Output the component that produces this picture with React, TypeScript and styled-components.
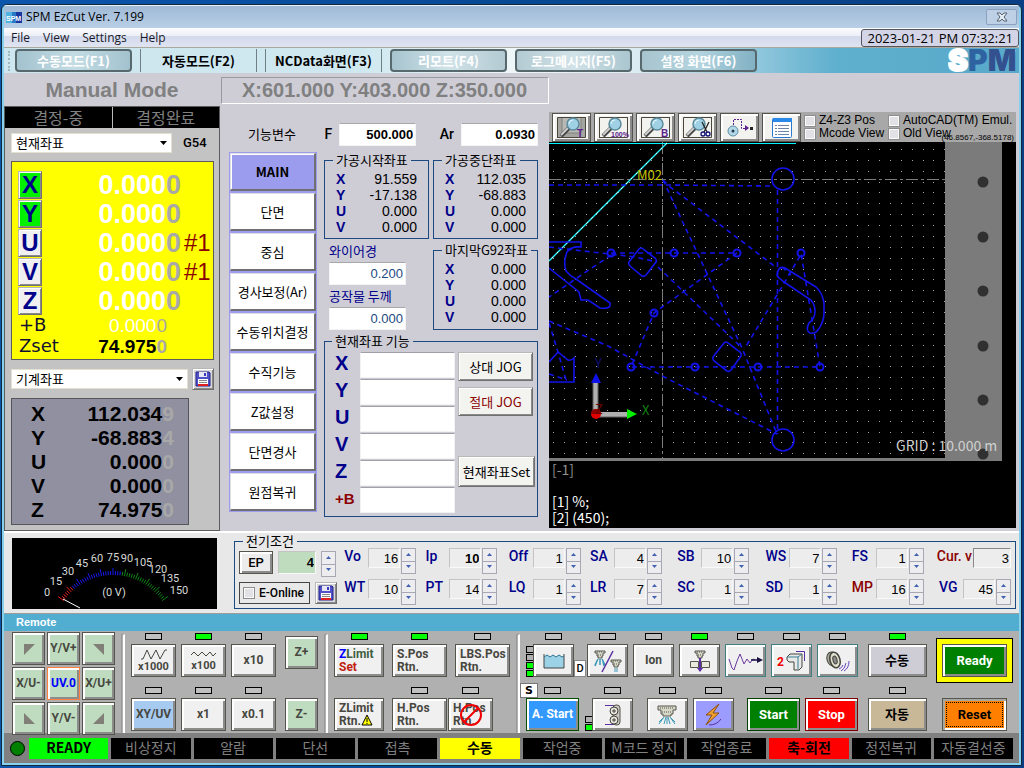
import React from 'react';
import styled, { createGlobalStyle, css } from 'styled-components';

const GlobalStyle = createGlobalStyle`
  * { box-sizing: border-box; }
  body {
    margin: 0;
    background: #0a4fa5;
    color: #000;
    font-family: "Liberation Sans", "Noto Sans CJK KR", sans-serif;
    font-size: 13px;
  }
  button, input, select { font-family: inherit; margin: 0; }
  button { padding: 0; cursor: pointer; }
  svg { display: block; }
`;

const uiFont = '"Open Sans", "Noto Sans CJK KR", sans-serif';
const koFont = '"Noto Sans CJK KR", "Liberation Sans", sans-serif';
const panelFont = 'Roboto, "Noto Sans CJK KR", sans-serif';
const navy = '#00008b';
const maroon = '#8b0000';

const raised = css`
  border: 1px solid #55554d;
  box-shadow: inset 2px 2px 0 #fff, inset -2px -2px 0 #8c8c8c;
`;
const softRaised = css`
  border: 1px solid #b8b8b8;
  border-right-color: #707070;
  border-bottom-color: #707070;
  box-shadow: inset 1px 1px 0 #fff, inset -1px -1px 0 #8a8a8a;
`;

/* ---------- window frame ---------- */

const Desktop = styled.div`
  min-height: 100vh;
  padding: 4px 2px 2px 1px;
  background: linear-gradient(90deg, #0b55ad, #06468f 60%, #0a3f86);
`;
const Window = styled.div`
  border: 1px solid #14283c;
  border-radius: 6px 6px 0 0;
  padding: 0 2px 2px;
  background: #86d2ee;
  overflow: hidden;
`;
const TitleBar = styled.header`
  display: flex;
  align-items: center;
  gap: 4px;
  height: 23px;
  padding: 0 2px;
  background: linear-gradient(#9fb9d6, #b9cfe7);
  border-top: 1px solid #e8f2fb;
  font: 12px/20px ${uiFont};
`;
const TitleText = styled.h1`
  flex: 1;
  margin: 0;
  font: inherit;
`;
const CloseButton = styled.button`
  display: grid;
  place-items: center;
  width: 31px;
  height: 16px;
  border: 1px solid #8aa2c0;
  border-radius: 2px;
  background: #bdd0e6;
`;
const MenuBar = styled.nav`
  display: flex;
  align-items: center;
  height: 20px;
  padding-left: 7px;
  border-bottom: 1px solid #a8a89c;
  background: linear-gradient(#fdfdff, #eceff8 40%, #d3daec 45%, #e0e4f2);
  font: 12px/18px ${uiFont};
`;
const MenuLink = styled.a`
  margin-right: 13px;
  color: #1a1a2a;
  text-decoration: none;
`;
const Clock = styled.time`
  margin-left: auto;
  padding: 0 5px;
  border: 1px solid #55555f;
  border-radius: 3px;
  background: #d3d5e6;
  font-size: 13px;
  line-height: 16px;
`;
const ModeBar = styled.nav`
  display: flex;
  align-items: center;
  gap: 8px;
  height: 25px;
  padding-left: 4px;
  background: linear-gradient(90deg, #cde6ef, #cfe8f0 35%, #eef6f8 50%, #dcedf2 62%, #5fafce 82%, #58a9ca);
  overflow: hidden;
`;
const Grip = styled.span`
  width: 3px;
  height: 20px;
  margin-right: -4px;
  border-left: 2px dotted #a0b8c0;
`;
const ModeButton = styled.button<{ $plain?: boolean }>`
  flex: none;
  width: 117px;
  height: 23px;
  font: bold 13px/18px ${koFont};
  color: #fff;
  background: linear-gradient(90deg, rgba(110, 150, 165, 0.45), rgba(180, 205, 212, 0.4) 50%, rgba(110, 150, 165, 0.45));
  border: 2px solid #58696e;
  border-radius: 4px;
  white-space: nowrap;
  ${(p) =>
    p.$plain &&
    css`
      color: #000;
      background: none;
      border: 0 solid #6f8086;
      border-width: 0 1px;
      border-radius: 0;
    `}
`;
const LogoSlot = styled.div`
  margin-left: auto;
`;

/* ---------- main area ---------- */

const Main = styled.main`
  display: grid;
  grid-template-columns: 216px 329px minmax(0, 1fr);
  grid-template-rows: 33px auto;
  padding-right: 3px;
  background: #cecdd6;
`;
const ModeHeading = styled.h2`
  margin: 0;
  font-size: 21px;
  line-height: 33px;
  text-align: center;
  color: #808080;
`;
const MachineReadout = styled.output`
  margin: 4px 0 2px 1px;
  padding-left: 20px;
  border: 1px solid #fff;
  border-top-color: #98989e;
  border-left-color: #98989e;
  font-weight: bold;
  font-size: 20px;
  line-height: 25px;
  color: #808080;
  white-space: nowrap;
`;
const LeftPanel = styled.section`
  grid-column: 1;
  border: 1px solid #5c5c5c;
  background: #c3c3c3;
`;
const LampRow = styled.div`
  display: grid;
  grid-template-columns: 1fr 1fr;
  gap: 1px;
  background: #bbb;
`;
const Lamp = styled.div`
  height: 21px;
  background: #000;
  color: #808080;
  font: 16px/20px ${koFont};
  text-align: center;
`;
const LeftBody = styled.div`
  display: flex;
  flex-direction: column;
  gap: 8px;
  padding: 5px 5px 5px 6px;
`;
const SelectRow = styled.div`
  display: flex;
  align-items: center;
  gap: 4px;
`;
const Offset = styled.span`
  flex: none;
  width: 38px;
  font: 500 13px/20px ${panelFont};
  padding-left: 7px;
`;
const SelectWrap = styled.span`
  position: relative;
  flex: 1;
`;
const Select = styled.select`
  display: block;
  width: 100%;
  height: 20px;
  padding: 0 4px;
  border: 1px solid #e4e0d0;
  border-radius: 0;
  background: #fff;
  appearance: none;
  font: 13px/18px ${koFont};
`;
const SelectArrow = styled.svg`
  position: absolute;
  right: 5px;
  top: 8px;
  pointer-events: none;
`;
const IconButton = styled.button`
  display: grid;
  place-items: center;
  flex: none;
  width: 22px;
  height: 22px;
  background: #d8d8d8;
  ${softRaised}
`;
const WorkCoords = styled.div`
  padding: 8px 2px 2px 6px;
  border: 1px solid #5c5c5c;
  background: #ff0;
`;
const WorkRow = styled.div`
  display: grid;
  grid-template-columns: 24px 139px 1fr;
  align-items: center;
  height: 29px;
  color: #fff;
  font-weight: bold;
  font-size: 27px;
  line-height: 28px;
`;
const AxisKey = styled.button<{ $on?: boolean }>`
  height: 28px;
  ${softRaised}
  background: ${(p) => (p.$on ? '#00f000' : '#f0f0f0')};
  color: ${navy};
  font-weight: bold;
  font-size: 24px;
  line-height: 24px;
`;
const Digits = styled.span`
  text-align: right;
`;
const Faint = styled.span`
  color: #a8a8a8;
`;
const AxisNote = styled.span`
  padding-left: 3px;
  font-weight: normal;
  font-size: 24px;
  color: ${maroon};
`;
const SubRow = styled.div<{ $strong?: boolean }>`
  display: grid;
  grid-template-columns: 46px 102px;
  height: 21px;
  padding-left: 1px;
  font-size: 19px;
  line-height: 22px;
  color: ${(p) => (p.$strong ? '#000' : '#fff')};
  font-weight: ${(p) => (p.$strong ? 'bold' : 'normal')};
`;
const SubLabel = styled.span`
  color: #101030;
  font: 18px/20px "DejaVu Sans", sans-serif;
`;
const MachineCoords = styled.div`
  width: 178px;
  padding: 3px 14px 2px 19px;
  border: 1px solid #55555c;
  background: #9090a0;
  font-weight: bold;
  font-size: 21px;
  line-height: 24px;
`;
const MachineRow = styled.div`
  display: flex;
  justify-content: space-between;
`;

/* ---------- function area ---------- */

const FunctionPanel = styled.section`
  padding: 16px 11px 12px 9px;
`;
const FunctionHeader = styled.div`
  display: flex;
  align-items: center;
  height: 24px;
  margin-bottom: 6px;
`;
const FunctionTitle = styled.span`
  width: 95px;
  padding-left: 19px;
  font: 13px/18px ${koFont};
`;
const FieldLabel = styled.label<{ $w: number }>`
  width: ${(p) => p.$w}px;
  padding-right: 7px;
  text-align: right;
  font: 500 14px/18px ${panelFont};
`;
const ValueInput = styled.input<{ $blue?: boolean }>`
  width: 77px;
  height: 23px;
  padding: 0 2px;
  border: 1px solid #f4f4f4;
  border-top-color: #a8a8a8;
  background: #fff;
  text-align: right;
  font-size: 13px;
  font-weight: ${(p) => (p.$blue ? 'normal' : 'bold')};
  color: ${(p) => (p.$blue ? '#1c4a80' : '#000')};
`;
const FunctionBody = styled.div`
  display: grid;
  grid-template-columns: 88px 1fr;
  gap: 7px;
`;
const FunctionMenu = styled.nav`
  display: grid;
  grid-auto-rows: 40px;
  align-self: start;
  background: #9c9cf0;
`;
const FunctionButton = styled.button<{ $main?: boolean }>`
  margin: 1px;
  border: 1px solid #e0e0e0;
  border-right: 2px solid #707070;
  border-bottom: 2px solid #707070;
  background: ${(p) => (p.$main ? '#9c9cee' : '#fff')};
  box-shadow: inset 1px 1px 0 #fff;
  font: ${(p) => (p.$main ? 'bold' : 'normal')} 13px/20px ${koFont};
  white-space: nowrap;
`;
const FunctionGrid = styled.div`
  display: grid;
  grid-template-columns: 1fr 1fr;
  align-content: start;
  gap: 3px 4px;
`;
const Group = styled.fieldset<{ $wide?: boolean }>`
  min-width: 0;
  margin: 0;
  padding: 3px 11px;
  border: 1px solid #1c4a80;
  ${(p) =>
    p.$wide &&
    css`
      grid-column: 1 / -1;
      padding: 3px 2px 2px 10px;
    `}
`;
const GroupTitle = styled.legend`
  margin-left: -3px;
  padding: 0 3px;
  font: 13px/16px ${koFont};
  white-space: nowrap;
`;
const CoordRow = styled.div`
  display: flex;
  justify-content: space-between;
  font-size: 14px;
  line-height: 16px;
`;
const AxisName = styled.span`
  color: ${navy};
  font-weight: bold;
`;
const WireFields = styled.div`
  display: flex;
  flex-direction: column;
  padding-left: 5px;
`;
const WireLabel = styled.label`
  height: 20px;
  color: ${navy};
  font: 13px/18px ${koFont};
`;
const WireGap = styled.div`
  height: 24px;
  margin-bottom: 1px;
`;
const SetLayout = styled.div`
  display: grid;
  grid-template-columns: 22px 95px 77px;
  column-gap: 3px;
`;
const SetColumn = styled.div`
  display: grid;
  grid-auto-rows: 27px;
`;
const SetLabel = styled.label<{ $red?: boolean }>`
  color: ${(p) => (p.$red ? maroon : navy)};
  font-weight: bold;
  font-size: ${(p) => (p.$red ? 15 : 20)}px;
  line-height: 23px;
`;
const SetInput = styled.input`
  width: 100%;
  min-width: 0;
  height: 26px;
  border: 1px solid #f2f2f2;
  border-top-color: #a0a0a8;
  background: #fff;
  text-align: right;
`;
const SetButtons = styled.div`
  display: flex;
  flex-direction: column;
  align-items: flex-start;
  gap: 6px;
`;
const SetButton = styled.button<{ $red?: boolean; $last?: boolean }>`
  width: ${(p) => (p.$last ? 77 : 75)}px;
  height: ${(p) => (p.$last ? 31 : 29)}px;
  margin-top: ${(p) => (p.$last ? 34 : 0)}px;
  ${softRaised}
  background: #f3f3f0;
  color: ${(p) => (p.$red ? maroon : '#000')};
  font: 13px/20px ${koFont};
  white-space: nowrap;
`;

/* ---------- drawing view ---------- */

const ViewPanel = styled.section`
  display: flex;
  flex-direction: column;
  margin: 6px 0 3px;
  background: #000;
`;
const ViewTools = styled.div`
  display: flex;
  align-items: center;
  gap: 3px;
  height: 30px;
  padding-left: 3px;
  background: #a8a8a8;
`;
const ViewButton = styled.button`
  display: grid;
  place-items: center;
  flex: none;
  width: 39px;
  height: 29px;
  background: #f2f2ee;
  ${raised}
`;
const CheckArea = styled.div`
  position: relative;
  flex: 1;
`;
const ViewChecks = styled.div`
  display: grid;
  grid-template-columns: 82px auto;
  column-gap: 2px;
`;
const CheckLabel = styled.label`
  display: flex;
  align-items: center;
  gap: 3px;
  height: 13px;
  font-size: 12px;
  line-height: 13px;
  white-space: nowrap;
`;
const Check = styled.input`
  appearance: none;
  flex: none;
  width: 12px;
  height: 12px;
  margin: 0;
  border: 1px solid #8e8e8e;
  background: #e2e2e6;
  box-shadow: inset 0 0 0 1px #fafafa;
`;
const CursorPosition = styled.output`
  position: absolute;
  right: 2px;
  bottom: -2px;
  font-size: 8px;
  line-height: 8px;
`;
const Log = styled.pre`
  flex: 1;
  height: 66px;
  margin: 0;
  padding-left: 3px;
  color: #fff;
  font: 14px/16px ${koFont};
`;
const LogMuted = styled.span`
  color: #909090;
`;

/* ---------- discharge conditions ---------- */

const Conditions = styled.section`
  display: flex;
  gap: 17px;
  padding: 0 3px 4px 8px;
  border-top: 2px solid #fff;
  border-bottom: 1px solid #9c9c9c;
  background: #e8e8e8;
`;
const Meter = styled.svg`
  flex: none;
  margin-top: 5px;
  background: #000;
`;
const ConditionGroup = styled.fieldset`
  display: flex;
  flex: 1;
  min-width: 0;
  height: 76px;
  margin: 0;
  padding: 1px 4px 0;
  border: 1px solid #1c4a80;
`;
const ConditionTitle = styled.legend`
  margin-left: 4px;
  padding: 0 3px;
  font: 13px/16px ${koFont};
`;
const Presets = styled.div`
  flex: none;
  width: 99px;
  display: grid;
  gap: 5px;
  padding-top: 1px;
  align-content: start;
`;
const PresetRow = styled.div`
  display: flex;
  align-items: flex-start;
  gap: 5px;
`;
const EpButton = styled.button`
  width: 34px;
  height: 23px;
  background: #ececec;
  ${raised}
  font: 500 13px/18px ${panelFont};
`;
const OnlineBox = styled.label`
  display: flex;
  align-items: center;
  gap: 4px;
  width: 71px;
  height: 22px;
  padding-left: 3px;
  border: 1px solid #444;
  font: 500 12px/18px ${panelFont};
  white-space: nowrap;
`;
const ParamGrid = styled.div`
  flex: 1;
  min-width: 0;
  display: grid;
  grid-template-columns: 78fr 81fr 83fr 81fr 87fr 88fr 86fr 87fr;
  grid-auto-rows: 31px;
  margin-top: -2px;
`;
const Param = styled.div`
  display: flex;
  justify-content: flex-end;
  gap: 1px;
`;
const ParamLabel = styled.label<{ $red?: boolean }>`
  min-width: 23px;
  font: 500 14px/17px ${panelFont};
  color: ${(p) => (p.$red ? maroon : navy)};
  white-space: nowrap;
`;
const ParamInput = styled.input<{ $green?: boolean; $strong?: boolean; $sunk?: boolean }>`
  width: ${(p) => (p.$green || p.$sunk ? 38 : 32)}px;
  height: ${(p) => (p.$green ? 23 : 20)}px;
  padding: 0 1px;
  border: 1px solid #fafafa;
  border-top-color: ${(p) => (p.$sunk ? '#888' : '#c4c4c4')};
  border-left-color: ${(p) => (p.$sunk ? '#888' : '#c4c4c4')};
  background: ${(p) => (p.$green ? '#bfdcbf' : '#ededed')};
  font-size: 13px;
  font-weight: ${(p) => (p.$green || p.$strong ? 'bold' : 'normal')};
  text-align: right;
`;
const Spinner = styled.span`
  display: grid;
  width: 15px;
  height: 26px;
  border: 1px solid #a8a8b4;
`;
const SpinButton = styled.button`
  display: grid;
  place-items: center;
  border: 0;
  background: #ededf0;
  & + & {
    border-top: 1px solid #a8a8b4;
  }
`;

/* ---------- remote panel ---------- */

const RemoteTitle = styled.h2`
  margin: 0;
  height: 17px;
  padding-left: 12px;
  background: #52aed0;
  color: #fff;
  font: bold 11px/17px "Liberation Sans", sans-serif;
`;
const Remote = styled.section`
  display: flex;
  justify-content: space-between;
  height: 102px;
  padding: 1px 6px 0 8px;
  background: #b0b0b0;
`;
const RemoteKeys = styled.div`
  display: flex;
  gap: 6px;
`;
const StepKeys = styled.div`
  display: flex;
  gap: 9px;
`;
const JogPad = styled.div`
  display: grid;
  grid-template-columns: repeat(3, 33px);
  grid-auto-rows: 33px;
  gap: 2px;
`;
const PanelButton = styled.button<{
  $w?: number;
  $bg?: string;
  $color?: string;
  $edge?: string;
  $left?: boolean;
  $size?: number;
}>`
  display: flex;
  flex-direction: column;
  align-items: ${(p) => (p.$left ? 'flex-start' : 'center')};
  justify-content: center;
  flex: none;
  width: ${(p) => p.$w ?? 33}px;
  height: 33px;
  padding-left: ${(p) => (p.$left ? 4 : 0)}px;
  ${raised}
  border-color: ${(p) => p.$edge ?? '#55554d'};
  background: ${(p) => p.$bg ?? '#f0f0f0'};
  color: ${(p) => p.$color ?? '#47473f'};
  font: bold ${(p) => p.$size ?? 12}px/13px ${panelFont};
  white-space: nowrap;
`;
const Divider = styled.span`
  width: 4px;
  margin-top: 2px;
  border: 1px solid #989898;
  border-right: 2px solid #fff;
  border-bottom: 0;
`;
const KeyBlock = styled.div`
  display: flex;
  flex-direction: column;
  gap: 10px;
  padding-top: 1px;
`;
const KeyRow = styled.div<{ $gap?: number; $spread?: boolean }>`
  display: flex;
  align-items: flex-end;
  gap: ${(p) => p.$gap ?? 5}px;
  justify-content: ${(p) => (p.$spread ? 'space-between' : 'flex-start')};
`;
const Key = styled.div`
  position: relative;
  display: flex;
  flex-direction: column;
  align-items: center;
  gap: 4px;
`;
const Led = styled.span<{ $on?: boolean; $hidden?: boolean }>`
  width: 17px;
  height: 7px;
  border: 1px solid #000;
  background: ${(p) => (p.$on ? '#0f0' : '#c0c0c0')};
  visibility: ${(p) => (p.$hidden ? 'hidden' : 'visible')};
`;
const SideLeds = styled.div`
  display: flex;
  flex-direction: column;
  gap: 1px;
  width: 7px;
  overflow: hidden;
`;
const SideLed = styled.span<{ $on?: boolean }>`
  width: 9px;
  height: 7px;
  border: 1px solid #000;
  background: ${(p) => (p.$on ? '#0f0' : '#b0b0b0')};
`;
const KeyJoin = styled.div`
  display: flex;
  align-items: flex-end;
`;
const ZKeys = styled.div`
  display: flex;
  flex-direction: column;
  justify-content: space-between;
  padding: 4px 0 2px;
`;
const SmallKey = styled.button`
  width: 12px;
  height: 17px;
  border: 1px solid #888;
  background: #fff;
  font: 500 11px/14px ${panelFont};
`;
const SelectKey = styled.button`
  position: absolute;
  left: -6px;
  top: -4px;
  width: 18px;
  height: 15px;
  border: 1px solid #777;
  background: #fff;
  font: bold 11px/13px "DejaVu Sans", sans-serif;
`;
const Blue = styled.span`
  color: #00f;
`;
const Green = styled.span`
  color: #3f6040;
`;
const Red = styled.span`
  color: #c02010;
`;
const Prohibited = styled.svg`
  position: absolute;
  left: 11px;
  bottom: 4px;
  pointer-events: none;
`;
const Warning = styled.svg`
  display: inline-block;
  margin: -2px 0 -1px;
`;
const ReadyColumn = styled.div`
  display: flex;
  flex-direction: column;
  align-items: center;
  justify-content: space-between;
  padding: 6px 0 2px;
`;
const ReadyFrame = styled.div`
  padding: 5px;
  border: 1px solid #000;
  background: #ff0;
`;
const ResetButton = styled.button`
  width: 65px;
  height: 33px;
  border: 1px solid #55554d;
  background: #ff8000;
  box-shadow: inset 2px 2px 0 #a8a8a0, inset -2px -2px 0 #fff;
  font: bold 13px/18px ${panelFont};
  outline: 1px dotted #000;
  outline-offset: -5px;
`;

/* ---------- status bar ---------- */

const StatusBar = styled.footer`
  display: flex;
  align-items: center;
  gap: 3px;
  height: 30px;
  padding: 0 6px;
  background: #808080;
`;
const StatusLight = styled.span`
  flex: none;
  width: 15px;
  height: 15px;
  margin-right: 1px;
  border: 1px solid #000;
  border-radius: 50%;
  background: #008000;
`;
const StatusCell = styled.div<{ $bg?: string }>`
  flex: 1 1 0;
  min-width: 0;
  height: 21px;
  background: ${(p) => p.$bg ?? '#000'};
  color: ${(p) => (p.$bg ? '#000' : '#808080')};
  font: ${(p) => (p.$bg ? 'bold' : 'normal')} 14px/19px ${koFont};
  text-align: center;
  white-space: nowrap;
`;

/* ---------- icons ---------- */

const AppIcon = () => (
  <svg width="16" height="11" viewBox="0 0 16 11">
    <rect width="16" height="11" fill="#1838a0" />
    <rect width="6" height="11" fill="#4fb4e4" />
    <rect x="6" width="4" height="11" fill="#2a78c8" />
    <text x="0" y="9" fontSize="7" fontWeight="bold" fontFamily="Liberation Sans, sans-serif" fill="#fff">
      SPM
    </text>
  </svg>
);

const CloseIcon = () => (
  <svg width="12" height="10" viewBox="0 0 12 10">
    <path d="M1 1h3l2 2 2-2h3L8 5l3 4H8L6 7 4 9H1l3-4z" fill="#e4ecf6" stroke="#56616e" />
  </svg>
);

const Logo = () => (
  <svg width="71" height="25" viewBox="0 0 71 25">
    <path d="M59 2h9l-4 13z" fill="#c4c8d0" />
    <text x="0" y="23" fontFamily="Inter, sans-serif" fontWeight="900" fontSize="30">
      <tspan fill="#fff" stroke="#fff" strokeWidth="2">S</tspan>
      <tspan fill="#2f62a0">P</tspan>
      <tspan fill="#33508f">M</tspan>
    </text>
  </svg>
);

const DiskIcon = () => (
  <svg width="16" height="16" viewBox="0 0 16 16">
    <path d="M1 1h13l1 1v13H1z" fill="#5050c8" stroke="#22228a" />
    <rect x="4" y="1" width="8" height="5" fill="#e8e8f4" />
    <rect x="9" y="2" width="2" height="3" fill="#3838b8" />
    <rect x="3" y="8" width="10" height="7" fill="#fff" />
    <path d="M4 9.500h8M4 11.500h8" stroke="#888" />
    <path d="M3 14h10" stroke="#e02020" strokeWidth="2" />
  </svg>
);

const Arrow = () => (
  <SelectArrow width="7" height="4" viewBox="0 0 7 4">
    <path d="M0 0h7L3.500 4z" />
  </SelectArrow>
);

const Lens = ({ kind }: { kind: 'T' | '100%' | 'B' | 'cut' }) => (
  <svg width="33" height="23" viewBox="0 0 33 23">
    <path d="M2.500 22V1.500H31" fill="none" stroke="#4a463c" />
    <path d="M30.500 2v19.500H3" fill="none" stroke="#4a463c" />
    {kind === 'T' && <path d="M3 2h27v19H3z" fill="#a4a4a0" />}
    {kind === 'T' && <path d="M7 2v15h19V2" fill="#b8b8b4" stroke="#80807c" />}
    <path d="M14 12l-8 8" stroke="#444" strokeWidth="4" />
    <path d="M13 12l-7 7" stroke="#d0d0d0" strokeWidth="2" />
    <circle cx="18" cy="8" r="6" fill="#9fd0e4" stroke="#5a8a9c" strokeWidth="1.500" />
    <path d="M14 8a4 4 0 014-4" stroke="#e8f8ff" fill="none" />
    {kind === 'cut' ? (
      <g stroke="#10107a" fill="none" strokeWidth="1.300">
        <path d="M21 6l5 10M28 6l-5 10" stroke="#222" />
        <circle cx="22" cy="18" r="2" />
        <circle cx="27" cy="18" r="2" />
      </g>
    ) : (
      <text
        x={kind === '100%' ? 14 : 22}
        y="21"
        fontSize={kind === '100%' ? 7 : 10}
        fontWeight="bold"
        fontFamily="Liberation Sans, sans-serif"
        fill="#5a2090"
      >
        {kind}
      </text>
    )}
  </svg>
);

const PathIcon = () => (
  <svg width="31" height="23" viewBox="0 0 31 23">
    <path d="M9.500 12V3.500h8v9h7" stroke="#5a2090" strokeDasharray="2 1" fill="none" />
    <path d="M21 9l4 3-4 3z" fill="#5a2090" />
    <rect x="26" y="11" width="3" height="3" fill="#222" />
    <circle cx="9" cy="15" r="5" fill="#b4d8e8" stroke="#5a8fa6" />
    <circle cx="9" cy="15" r="1.500" fill="#204050" />
  </svg>
);

const ListIcon = () => (
  <svg width="31" height="23" viewBox="0 0 31 23">
    <rect x="6.500" y="2.500" width="19" height="19" rx="1" fill="#fff" stroke="#2a78d0" />
    <rect x="7" y="2" width="19" height="4" fill="#2a88e8" />
    <path d="M9 9.500h2M9 12.500h2M9 15.500h2M9 18.500h2M12 9.500h11M12 12.500h11M12 15.500h11M12 18.500h11" stroke="#6b86a8" />
  </svg>
);

const SpinArrow = ({ down }: { down?: boolean }) => (
  <svg width="7" height="4" viewBox="0 0 7 4">
    <path d={down ? 'M1 0h5L3.500 3z' : 'M1 3h5L3.500 0z'} fill="#4060b0" />
  </svg>
);

const Corner = ({ d }: { d: string }) => (
  <svg width="12" height="12" viewBox="0 0 12 12">
    <path d={d} fill="#808078" />
  </svg>
);

const SawWave = () => (
  <svg width="27" height="11" viewBox="0 0 27 11">
    <path d="M1 10h2l4-9 4 9 5-9 4 9 5-9h2" fill="none" stroke="#47473f" />
  </svg>
);

const RippleWave = () => (
  <svg width="27" height="9" viewBox="0 0 27 9">
    <path d="M1 5l3-3 4 4 4-4 4 4 4-4 3 4 3-3" fill="none" stroke="#47473f" />
  </svg>
);

const TankIcon = () => (
  <svg width="22" height="16" viewBox="0 0 22 16">
    <path d="M1 4l3-2 3 2 3-2 3 2 3-2 3 2 2-1v12H1z" fill="#9cd2e6" />
    <path d="M1 1v14h20V1" fill="none" stroke="#444" />
    <path d="M1 4l3-2 3 2 3-2 3 2 3-2 3 2 2-1" fill="none" stroke="#2e7290" />
  </svg>
);

const NozzleShape = ({ x, y }: { x: number; y: number }) => (
  <g transform={`translate(${x} ${y})`}>
    <path d="M0 0h10v2H8v3H7v2H3V5H2V2H0z" fill="#d8d8c8" stroke="#55554d" />
    <path d="M2 1h6M3 4h4" stroke="#55554d" strokeDasharray="1 1" />
  </g>
);

const DualSprayIcon = () => (
  <svg width="30" height="24" viewBox="0 0 30 24">
    <NozzleShape x={2} y={2} />
    <path d="M5 10l-3 6M7 10v6M9 10l3 6M4 12l-2 5M10 12l1 5" stroke="#3a98b8" strokeWidth="1.500" fill="none" />
    <NozzleShape x={18} y={11} />
    <path d="M22 19v4M24 19v4" stroke="#3a98b8" />
    <path d="M20 2L9 23" stroke="#5a2fa0" strokeWidth="1.500" />
  </svg>
);

const ThreadIcon = () => (
  <svg width="28" height="24" viewBox="0 0 28 24">
    <NozzleShape x={9} y={2} />
    <path d="M4.500 12.500h8v6h-8zM15.500 12.500h8v6h-8z" fill="#e8e8dc" stroke="#55554d" />
    <path d="M14 9v12" stroke="#5a2fa0" strokeWidth="2" />
    <path d="M11 19h6l-3 4z" fill="#5a2fa0" />
  </svg>
);

const FeedWaveIcon = () => (
  <svg width="37" height="24" viewBox="0 0 37 24">
    <path d="M2 10l3 9 2 2 3-9 3-7 4 10 3-5 3 4 3-4 2 1" fill="none" stroke="#6a3aa0" />
    <path d="M24 11h8" stroke="#1a1040" strokeWidth="1.500" />
    <path d="M30 8l6 3-6 3z" fill="#1a1040" />
  </svg>
);

const SecondCutIcon = () => (
  <svg width="32" height="24" viewBox="0 0 32 24">
    <text x="1" y="17" fontSize="12" fontWeight="bold" fontFamily="Roboto, sans-serif" fill="#f00000">
      2
    </text>
    <path d="M11 8l3-3h12v13l-3 3h-5v-8h-5l-2-2z" fill="#e8e8e8" stroke="#44443c" />
    <path d="M11 8h11l4-3M22 8v12" fill="none" stroke="#3a7f94" />
    <path d="M20 2.500h8.500V12" fill="none" stroke="#5a2fa0" />
  </svg>
);

const HornIcon = () => (
  <svg width="26" height="22" viewBox="0 0 26 22">
    <ellipse cx="7" cy="9" rx="5" ry="7" fill="#a8a89c" stroke="#44443c" transform="rotate(-15 7 9)" />
    <ellipse cx="10" cy="10" rx="5" ry="8" fill="#e0e0d0" stroke="#44443c" strokeWidth="1.500" transform="rotate(-15 10 10)" />
    <ellipse cx="10" cy="10" rx="2" ry="4" fill="#888" stroke="#44443c" transform="rotate(-15 10 10)" />
    <path d="M18 15q-1 3-4 4M21 13q-1 6-5 8M24 11q0 7-5 10" fill="none" stroke="#6a4ac0" />
  </svg>
);

const ReelIcon = () => (
  <svg width="20" height="22" viewBox="0 0 20 22">
    <path d="M2 1.500h11M2 20.500h11" stroke="#5a2fa0" />
    <rect x="10" y="1" width="7" height="20" rx="3" fill="#c8c8c0" stroke="#55554d" />
    <circle cx="11" cy="7" r="4" fill="#e8e8e0" stroke="#44443c" />
    <circle cx="11" cy="16" r="4" fill="#e8e8e0" stroke="#44443c" />
    <path d="M9 7h4M11 5v4M9 16h4M11 14v4" stroke="#44443c" />
  </svg>
);

const SprayIcon = () => (
  <svg width="22" height="20" viewBox="0 0 22 20">
    <path d="M2 1h18v4h-3v4h-2v2H7V9H5V5H2z" fill="#d8d8c8" stroke="#55554d" />
    <path d="M4 3h14M6 7h10" stroke="#55554d" strokeDasharray="1 1" />
    <path d="M8 12l-5 7M10 12l-2 7M12 12l2 7M14 12l5 7M11 12v7M7 13l-4 4M15 13l4 4" stroke="#3a98b8" />
  </svg>
);

const BoltIcon = () => (
  <svg width="22" height="24" viewBox="0 0 22 24">
    <path d="M17 1L4 12h6L4 22l13-12h-6z" fill="#f0a030" stroke="#8a5010" />
    <path d="M7 22q8 0 12-6" fill="none" stroke="#5a2fa0" />
  </svg>
);

/* ---------- drawing and meter ---------- */

const smallHoles = [
  [62, 111], [125, 111], [188, 111], [252, 111], [105, 171],
  [82, 225], [146, 225], [209, 225], [271, 225],
];
const feedMarks = [40, 95, 149, 204, 258, 312];
const gridDots = Array.from({ length: 29 * 37 }, (_, i) => {
  const x = Math.round(4 + (i % 37) * 10.87);
  const y = Math.round(7 + Math.floor(i / 37) * 10.87);
  return `M${x} ${y}h1v1h-1z`;
}).join('');

const Drawing = () => (
  <svg width="100%" height="319" viewBox="0 0 467 319" preserveAspectRatio="xMinYMin slice">
    <rect width="467" height="319" fill="#000" />
    <path d={gridDots} fill="#a4a4a4" />
    <rect x="396" width="57" height="319" fill="#7b7b7b" />
    <rect y="316" width="453" height="3" fill="#7b7b7b" />
    {feedMarks.map((y) => (
      <circle key={y} cx="434" cy={y} r="5.500" fill="#303030" />
    ))}
    <path d="M0 37.500h396M113.500 0v316" stroke="#7c7c7c" strokeDasharray="12 3 3 3" />
    <path d="M0 1.500h247" stroke="#00f4ff" />
    <path d="M118 1L0 119" stroke="#20f4ff" strokeWidth="1.400" />
    <path d="M118 1L0 119" stroke="#fff" strokeDasharray="2 5" />
    <g stroke="#1212ea" fill="none" strokeWidth="1.600">
      <g strokeDasharray="5 4">
        <path d="M0 43h114l110 1" />
        <path d="M228.500 48v244" />
        <path d="M114 38l6 6 108 82" />
        <path d="M114 38l79 168 35 86" />
        <path d="M62 111h126l-83 60-23 54h189L252 111" />
        <path d="M251 114l-17 29-38 63" />
        <path d="M62 113L0 155M0 105l86 10 22 5M109 125l84 81" />
        <path d="M0 179l59 25 60 33 109 55M0 181l9 29 8 28M0 232l18 6" />
        <path d="M233 125l9 8" />
      </g>
      <circle cx="234" cy="37" r="11" />
      <circle cx="234" cy="298" r="11" />
      {smallHoles.map(([x, y]) => (
        <circle key={`${x}-${y}`} cx={x} cy={y} r="3.500" strokeWidth="2" />
      ))}
      <path d="M90 107q2-2 4 0l12 9q2 2 1 4l-10 13q-2 2-4 1L81 124q-2-2-1-4z" />
      <path d="M175 201q2-2 4 0l12 9q2 2 1 4l-10 14q-2 2-4 1l-13-10q-2-2-1-4z" />
      <path d="M236 126q-5-2-7 3-2 5 1 7l5 4 27 18q4 5 4 11 0 8-6 12-4 7 1 10 5 1 8-3 6-8 6-17v-10q-2-11-8-16z" />
      <path d="M0 100h32v5q-10-1-14 5-4 10-1 19 4 5 10 8l34 24v3q-2 3-10 2l-12-8h-7l-2-8-30-24" />
      <path d="M0 220l9-10 10 8q3 1 6-2v24H0" />
    </g>
    <rect x="44" y="240" width="5" height="30" fill="#b0b0b0" />
    <path d="M44 240v30M49 240v30" stroke="#606060" />
    <rect x="50" y="270" width="29" height="5" fill="#b0b0b0" />
    <path d="M50 275h29" stroke="#606060" />
    <path d="M42 241h10l-5-10z" fill="#1010e8" />
    <path d="M78 267v10l10-5z" fill="#00f000" />
    <circle cx="47" cy="272" r="5" fill="#e00000" />
    <path d="M42 272a5 5 0 0110 0z" fill="#900000" />
    <g fontFamily="'Noto Sans CJK KR', 'Liberation Sans', sans-serif" fontSize="13">
      <text x="88" y="38" fill="#c8c800">M02</text>
      <text x="46" y="226" fill="#101070">Y</text>
      <text x="93" y="273" fill="#108010">X</text>
      <text x="46" y="272" fill="#700000">Z</text>
      <text x="347" y="309" fill="#d0d0d0" fontSize="14">GRID : 10.000 m</text>
    </g>
  </svg>
);

const meterLabels: [string, number, number][] = [
  ['0', 35, 58], ['15', 44, 47], ['30', 56, 37], ['45', 70, 29], ['60', 85, 24], ['75', 101, 23],
  ['90', 115, 24], ['105', 131, 28], ['120', 146, 35], ['135', 158, 44], ['150', 167, 56],
];

const VoltMeter = () => (
  <Meter width="205" height="71" viewBox="0 0 205 71">
    {Array.from({ length: 51 }, (_, i) => {
      const a = ((145 - (i * 110) / 50) * Math.PI) / 180;
      const r = i % 5 === 0 ? 67 : 64;
      const tint = i < 7 ? '#f02020' : i < 29 ? '#1818f0' : '#108818';
      return (
        <line
          key={i}
          x1={101 + 60 * Math.cos(a)}
          y1={97 - 60 * Math.sin(a)}
          x2={101 + r * Math.cos(a)}
          y2={97 - r * Math.sin(a)}
          stroke={tint}
        />
      );
    })}
    <path d="M51 61l17 9" stroke="#fff" />
    <g fill="#d8d8d8" fontSize="11" fontFamily="Roboto, sans-serif" textAnchor="middle">
      {meterLabels.map(([t, x, y]) => (
        <text key={t} x={x} y={y}>
          {t}
        </text>
      ))}
      <text x="102" y="58">(0 V)</text>
    </g>
  </Meter>
);

/* ---------- data ---------- */

const modes: { name: string; plain?: boolean }[] = [
  { name: '수동모드(F1)' },
  { name: '자동모드(F2)', plain: true },
  { name: 'NCData화면(F3)', plain: true },
  { name: '리모트(F4)' },
  { name: '로그메시지(F5)' },
  { name: '설정 화면(F6)' },
];
const functions = ['MAIN', '단면', '중심', '경사보정(Ar)', '수동위치결정', '수직기능', 'Z값설정', '단면경사', '원점복귀'];
const setAxes = ['X', 'Y', 'U', 'V', 'Z', '+B'];
const machine: [string, string, string][] = [
  ['X', '112.034', '9'],
  ['Y', '-68.883', '4'],
  ['U', '0.000', '0'],
  ['V', '0.000', '0'],
  ['Z', '74.975', '0'],
];
const params: { name: string; value: string; strong?: boolean; red?: boolean; fixed?: boolean }[] = [
  { name: 'Vo', value: '16' },
  { name: 'Ip', value: '10', strong: true },
  { name: 'Off', value: '1' },
  { name: 'SA', value: '4' },
  { name: 'SB', value: '10' },
  { name: 'WS', value: '7' },
  { name: 'FS', value: '1' },
  { name: 'Cur. v', value: '3', red: true, fixed: true },
  { name: 'WT', value: '10' },
  { name: 'PT', value: '14' },
  { name: 'LQ', value: '1' },
  { name: 'LR', value: '7' },
  { name: 'SC', value: '1' },
  { name: 'SD', value: '1' },
  { name: 'MP', value: '16', red: true },
  { name: 'VG', value: '45' },
];
const statuses: [string, string?][] = [
  ['READY', '#0f0'],
  ['비상정지'],
  ['알람'],
  ['단선'],
  ['접촉'],
  ['수동', '#ff0'],
  ['작업중'],
  ['M코드 정지'],
  ['작업종료'],
  ['축-회전', '#f00'],
  ['정전복귀'],
  ['자동결선중'],
];

const padGreen = '#c0dcc0';
const teal = '#408080';

/* ---------- composed parts ---------- */

const CoordGroup = ({ title, values }: { title: string; values: string[] }) => (
  <Group>
    <GroupTitle>{title}</GroupTitle>
    {['X', 'Y', 'U', 'V'].map((axis, i) => (
      <CoordRow key={axis}>
        <AxisName>{axis}</AxisName>
        <span>{values[i]}</span>
      </CoordRow>
    ))}
  </Group>
);

const Spin = ({ name }: { name: string }) => (
  <Spinner>
    <SpinButton aria-label={`${name} +`}>
      <SpinArrow />
    </SpinButton>
    <SpinButton aria-label={`${name} -`}>
      <SpinArrow down />
    </SpinButton>
  </Spinner>
);

type PanelKeyProps = React.ComponentProps<typeof PanelButton> & { led?: boolean; noLed?: boolean; extra?: React.ReactNode };

const PanelKey = ({ led, noLed, extra, children, ...rest }: PanelKeyProps) => (
  <Key>
    <Led $on={led} $hidden={noLed} />
    <PanelButton {...rest}>{children}</PanelButton>
    {extra}
  </Key>
);

export default function App() {
  return (
    <Desktop>
      <GlobalStyle />
      <Window>
        <TitleBar>
          <AppIcon />
          <TitleText>SPM EzCut Ver. 7.199</TitleText>
          <CloseButton aria-label="Close">
            <CloseIcon />
          </CloseButton>
        </TitleBar>
        <MenuBar>
          {['File', 'View', 'Settings', 'Help'].map((m) => (
            <MenuLink key={m} href="#">
              {m}
            </MenuLink>
          ))}
          <Clock>2023-01-21 PM 07:32:21</Clock>
        </MenuBar>
        <ModeBar>
          <Grip />
          {modes.map((m) => (
            <ModeButton key={m.name} $plain={m.plain}>
              {m.name}
            </ModeButton>
          ))}
          <LogoSlot>
            <Logo />
          </LogoSlot>
        </ModeBar>

        <Main>
          <ModeHeading>Manual Mode</ModeHeading>
          <MachineReadout>X:601.000 Y:403.000 Z:350.000</MachineReadout>

          <LeftPanel>
            <LampRow>
              <Lamp>결정-중</Lamp>
              <Lamp>결정완료</Lamp>
            </LampRow>
            <LeftBody>
              <SelectRow>
                <SelectWrap>
                  <Select aria-label="현재좌표">
                    <option>현재좌표</option>
                  </Select>
                  <Arrow />
                </SelectWrap>
                <Offset>G54</Offset>
              </SelectRow>
              <WorkCoords>
                {['X', 'Y', 'U', 'V', 'Z'].map((axis) => (
                  <WorkRow key={axis}>
                    <AxisKey $on={axis === 'X' || axis === 'Y'}>{axis}</AxisKey>
                    <Digits>
                      0.000<Faint>0</Faint>
                    </Digits>
                    {(axis === 'U' || axis === 'V') && <AxisNote>#1</AxisNote>}
                  </WorkRow>
                ))}
                <SubRow>
                  <SubLabel>+B</SubLabel>
                  <Digits>
                    0.000<Faint>0</Faint>
                  </Digits>
                </SubRow>
                <SubRow $strong>
                  <SubLabel>Zset</SubLabel>
                  <Digits>
                    74.975<Faint>0</Faint>
                  </Digits>
                </SubRow>
              </WorkCoords>
              <SelectRow>
                <SelectWrap>
                  <Select aria-label="기계좌표">
                    <option>기계좌표</option>
                  </Select>
                  <Arrow />
                </SelectWrap>
                <IconButton aria-label="Save coordinates">
                  <DiskIcon />
                </IconButton>
              </SelectRow>
              <MachineCoords>
                {machine.map(([axis, value, last]) => (
                  <MachineRow key={axis}>
                    <span>{axis}</span>
                    <span>
                      {value}
                      <Faint>{last}</Faint>
                    </span>
                  </MachineRow>
                ))}
              </MachineCoords>
            </LeftBody>
          </LeftPanel>

          <FunctionPanel>
            <FunctionHeader>
              <FunctionTitle>기능변수</FunctionTitle>
              <FieldLabel $w={16} htmlFor="feed">
                F
              </FieldLabel>
              <ValueInput id="feed" defaultValue="500.000" />
              <FieldLabel $w={45} htmlFor="ar">
                Ar
              </FieldLabel>
              <ValueInput id="ar" defaultValue="0.0930" />
            </FunctionHeader>
            <FunctionBody>
              <FunctionMenu>
                {functions.map((f, i) => (
                  <FunctionButton key={f} $main={i === 0}>
                    {f}
                  </FunctionButton>
                ))}
              </FunctionMenu>
              <FunctionGrid>
                <CoordGroup title="가공시작좌표" values={['91.559', '-17.138', '0.000', '0.000']} />
                <CoordGroup title="가공중단좌표" values={['112.035', '-68.883', '0.000', '0.000']} />
                <WireFields>
                  <WireLabel htmlFor="wire">와이어경</WireLabel>
                  <WireGap>
                    <ValueInput id="wire" $blue defaultValue="0.200" />
                  </WireGap>
                  <WireLabel htmlFor="thickness">공작물 두께</WireLabel>
                  <ValueInput id="thickness" $blue defaultValue="0.000" />
                </WireFields>
                <CoordGroup title="마지막G92좌표" values={['0.000', '0.000', '0.000', '0.000']} />
                <Group $wide>
                  <GroupTitle>현재좌표 기능</GroupTitle>
                  <SetLayout>
                    <SetColumn>
                      {setAxes.map((a) => (
                        <SetLabel key={a} htmlFor={`set-${a}`} $red={a === '+B'}>
                          {a}
                        </SetLabel>
                      ))}
                    </SetColumn>
                    <SetColumn>
                      {setAxes.map((a) => (
                        <SetInput key={a} id={`set-${a}`} />
                      ))}
                    </SetColumn>
                    <SetButtons>
                      <SetButton>상대 JOG</SetButton>
                      <SetButton $red>절대 JOG</SetButton>
                      <SetButton $last>현재좌표Set</SetButton>
                    </SetButtons>
                  </SetLayout>
                </Group>
              </FunctionGrid>
            </FunctionBody>
          </FunctionPanel>

          <ViewPanel>
            <ViewTools>
              <ViewButton aria-label="Zoom T"><Lens kind="T" /></ViewButton>
              <ViewButton aria-label="Zoom 100%"><Lens kind="100%" /></ViewButton>
              <ViewButton aria-label="Zoom B"><Lens kind="B" /></ViewButton>
              <ViewButton aria-label="Zoom cut"><Lens kind="cut" /></ViewButton>
              <ViewButton aria-label="Path"><PathIcon /></ViewButton>
              <ViewButton aria-label="List"><ListIcon /></ViewButton>
              <CheckArea>
                <ViewChecks>
                  {['Z4-Z3 Pos', 'AutoCAD(TM) Emul.', 'Mcode View', 'Old View'].map((c) => (
                    <CheckLabel key={c}>
                      <Check type="checkbox" />
                      {c}
                    </CheckLabel>
                  ))}
                </ViewChecks>
                <CursorPosition>(46.8567,-368.5178)</CursorPosition>
              </CheckArea>
            </ViewTools>
            <Drawing />
            <Log>
              <LogMuted>[-1]</LogMuted>
              {'\n\n[1] %;\n[2] (450);'}
            </Log>
          </ViewPanel>
        </Main>

        <Conditions>
          <VoltMeter />
          <ConditionGroup>
            <ConditionTitle>전기조건</ConditionTitle>
            <Presets>
              <PresetRow>
                <EpButton>EP</EpButton>
                <ParamInput $green aria-label="EP" defaultValue="4" />
                <Spin name="EP" />
              </PresetRow>
              <PresetRow>
                <OnlineBox>
                  <Check type="checkbox" />
                  E-Online
                </OnlineBox>
                <IconButton aria-label="Save conditions">
                  <DiskIcon />
                </IconButton>
              </PresetRow>
            </Presets>
            <ParamGrid>
              {params.map((p) => (
                <Param key={p.name}>
                  <ParamLabel htmlFor={`p-${p.name}`} $red={p.red}>
                    {p.name}
                  </ParamLabel>
                  <ParamInput id={`p-${p.name}`} $strong={p.strong} $sunk={p.fixed} defaultValue={p.value} />
                  {!p.fixed && <Spin name={p.name} />}
                </Param>
              ))}
            </ParamGrid>
          </ConditionGroup>
        </Conditions>

        <RemoteTitle>Remote</RemoteTitle>
        <Remote>
          <RemoteKeys>
            <JogPad>
              <PanelButton $bg={padGreen} aria-label="Up left"><Corner d="M1 1h11L1 12z" /></PanelButton>
              <PanelButton $bg={padGreen}>Y/V+</PanelButton>
              <PanelButton $bg={padGreen} aria-label="Up right"><Corner d="M0 1h11v11z" /></PanelButton>
              <PanelButton $bg={padGreen}>X/U-</PanelButton>
              <PanelButton $bg={padGreen} $edge="#ff8040" $color="#00f">UV.0</PanelButton>
              <PanelButton $bg={padGreen}>X/U+</PanelButton>
              <PanelButton $bg={padGreen} aria-label="Down left"><Corner d="M1 0v11h11z" /></PanelButton>
              <PanelButton $bg={padGreen}>Y/V-</PanelButton>
              <PanelButton $bg={padGreen} aria-label="Down right"><Corner d="M11 0v11H0z" /></PanelButton>
            </JogPad>
            <Divider />
            <StepKeys>
              <KeyBlock>
                <KeyRow>
                  <PanelKey $w={45} $size={11}><SawWave />x1000</PanelKey>
                  <PanelKey $w={45} $size={11} led><RippleWave />x100</PanelKey>
                  <PanelKey $w={45}>x10</PanelKey>
                </KeyRow>
                <KeyRow>
                  <PanelKey $w={45} $bg="#a6caf0">XY/UV</PanelKey>
                  <PanelKey $w={45}>x1</PanelKey>
                  <PanelKey $w={45}>x0.1</PanelKey>
                </KeyRow>
              </KeyBlock>
              <ZKeys>
                <PanelButton $bg={padGreen}>Z+</PanelButton>
                <PanelButton $bg={padGreen}>Z-</PanelButton>
              </ZKeys>
            </StepKeys>
            <Divider />
            <KeyBlock>
              <KeyRow $gap={8}>
                <PanelKey $w={50} $left led>
                  <span><Blue>Z</Blue><Green>Limit</Green></span>
                  <Red>Set</Red>
                </PanelKey>
                <PanelKey $w={55} $left led><span>S.Pos</span><span>Rtn.</span></PanelKey>
                <PanelKey $w={55} $left><span>LBS.Pos</span><span>Rtn.</span></PanelKey>
              </KeyRow>
              <KeyRow $gap={1}>
                <KeyRow $gap={8}>
                  <PanelKey $w={50} $left noLed>
                    <span>ZLimit</span>
                    <span>
                      Rtn.
                      <Warning width="12" height="12" viewBox="0 0 12 12">
                        <path d="M6 1l5 10H1z" fill="#ff0" stroke="#000" />
                        <path d="M6 4v4M6 9v1" stroke="#000" />
                      </Warning>
                    </span>
                  </PanelKey>
                  <PanelKey $w={55} $left><span>H.Pos</span><span>Rtn.</span></PanelKey>
                </KeyRow>
                <PanelKey
                  $w={45}
                  $left
                  extra={
                    <Prohibited width="24" height="24" viewBox="0 0 24 24">
                      <circle cx="12" cy="12" r="10" fill="none" stroke="#f00000" strokeWidth="2" />
                      <path d="M5 19L19 5" stroke="#f00000" strokeWidth="2" />
                    </Prohibited>
                  }
                >
                  <span>H.Pos</span>
                  <span>Rtn.</span>
                </PanelKey>
              </KeyRow>
            </KeyBlock>
            <Divider />
            <KeyBlock>
              <KeyRow $gap={1}>
                <KeyJoin>
                  <SideLeds>
                    <SideLed />
                    <SideLed />
                    <SideLed $on />
                    <SideLed $on />
                  </SideLeds>
                  <PanelKey $w={41} aria-label="Tank"><TankIcon /></PanelKey>
                  <SmallKey>D</SmallKey>
                </KeyJoin>
                <KeyRow $gap={5}>
                  <PanelKey $w={41} aria-label="Spray"><DualSprayIcon /></PanelKey>
                  <PanelKey $w={41}>Ion</PanelKey>
                  <PanelKey $w={41} led aria-label="Thread"><ThreadIcon /></PanelKey>
                  <PanelKey $w={41} $edge={teal} aria-label="Feed"><FeedWaveIcon /></PanelKey>
                  <PanelKey $w={41} $edge={teal} aria-label="Second cut"><SecondCutIcon /></PanelKey>
                  <PanelKey $w={41} $edge={teal} aria-label="Buzzer"><HornIcon /></PanelKey>
                </KeyRow>
              </KeyRow>
              <KeyRow $spread>
                <KeyRow $gap={6}>
                  <PanelKey $w={53} $bg="#3399ff" $color="#fff" $edge="#005000" extra={<SelectKey>S</SelectKey>}>
                    A. Start
                  </PanelKey>
                  <KeyJoin>
                    <SideLeds>
                      <SideLed />
                      <SideLed $on />
                    </SideLeds>
                    <PanelKey $w={41} aria-label="Reel"><ReelIcon /></PanelKey>
                  </KeyJoin>
                </KeyRow>
                <KeyRow>
                  <PanelKey $w={41} aria-label="Flush"><SprayIcon /></PanelKey>
                  <PanelKey $w={41} $bg="#9c9cff" aria-label="Discharge"><BoltIcon /></PanelKey>
                </KeyRow>
                <KeyRow>
                  <PanelKey $w={53} $size={13} $bg="#008000" $color="#fff" $edge="#004000">Start</PanelKey>
                  <PanelKey $w={53} $size={13} $bg="#ff0000" $color="#fff" $edge="#800000">Stop</PanelKey>
                </KeyRow>
              </KeyRow>
            </KeyBlock>
          </RemoteKeys>
          <KeyBlock>
            <PanelKey $w={59} $size={13} $bg="#cecdd6" $color="#000" led>수동</PanelKey>
            <PanelKey $w={59} $size={13} $bg="#c8b898" $color="#000">자동</PanelKey>
          </KeyBlock>
          <ReadyColumn>
            <ReadyFrame>
              <PanelButton $w={65} $size={13} $bg="#008000" $color="#fff">Ready</PanelButton>
            </ReadyFrame>
            <ResetButton>Reset</ResetButton>
          </ReadyColumn>
        </Remote>

        <StatusBar>
          <StatusLight />
          {statuses.map(([name, bg]) => (
            <StatusCell key={name} $bg={bg}>
              {name}
            </StatusCell>
          ))}
        </StatusBar>
      </Window>
    </Desktop>
  );
}
